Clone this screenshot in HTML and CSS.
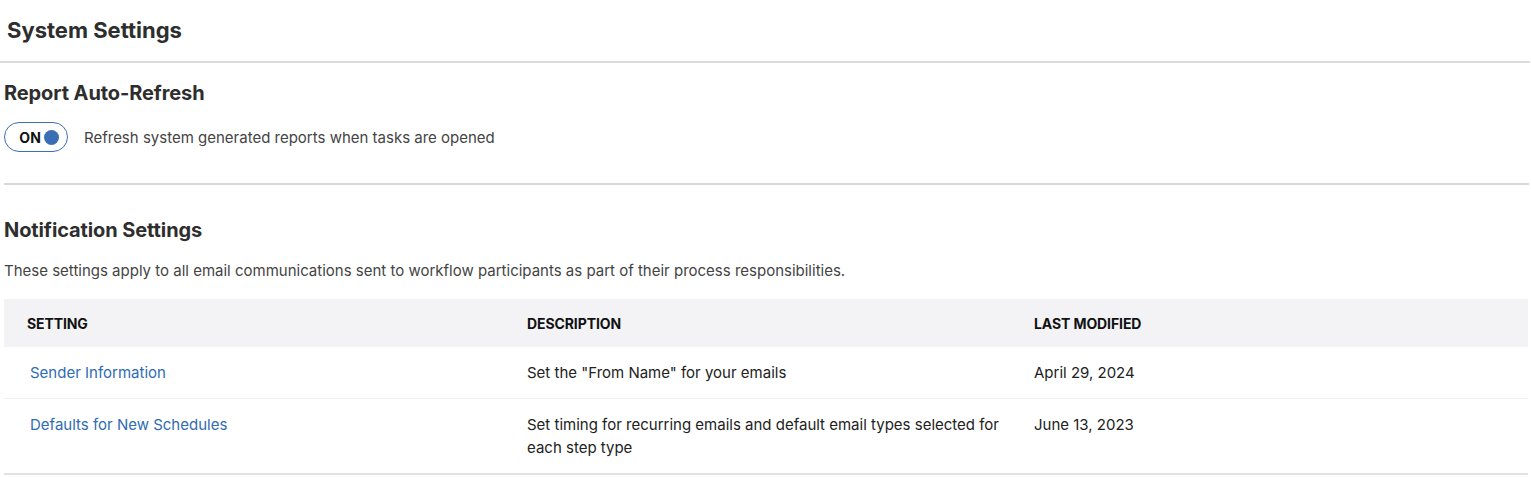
FILE: index.html
```html
<!DOCTYPE html>
<html>
<head>
<meta charset="utf-8">
<link rel="stylesheet" href="styles.css">
</head>
<body>
<header class="page-header">
  <h1 class="page-title">System Settings</h1>
</header>
<main class="content">
  <section class="section section-refresh">
    <h2 class="section-title">Report Auto-Refresh</h2>
    <div class="toggle-row">
      <span class="toggle"><span class="toggle-label">ON</span><span class="toggle-dot"></span></span>
      <span class="toggle-text">Refresh system generated reports when tasks are opened</span>
    </div>
  </section>
  <section class="section section-notify">
    <h2 class="section-title">Notification Settings</h2>
    <p class="section-desc">These settings apply to all email communications sent to workflow participants as part of their process responsibilities.</p>
    <div class="table">
      <div class="row head">
        <div class="cell c1">SETTING</div>
        <div class="cell c2">DESCRIPTION</div>
        <div class="cell c3">LAST MODIFIED</div>
      </div>
      <div class="row body">
        <div class="cell c1"><a class="link" href="#">Sender Information</a></div>
        <div class="cell c2">Set the "From Name" for your emails</div>
        <div class="cell c3">April 29, 2024</div>
      </div>
      <div class="row body last">
        <div class="cell c1"><a class="link" href="#">Defaults for New Schedules</a></div>
        <div class="cell c2">Set timing for recurring emails and default email types selected for each step type</div>
        <div class="cell c3">June 13, 2023</div>
      </div>
    </div>
  </section>
</main>
</body>
</html>
```

FILE: styles.css
```css
* { box-sizing: border-box; }
html, body { margin: 0; padding: 0; background: #fff; }
body {
  font-family: Inter, "Noto Sans", "Liberation Sans", sans-serif;
  color: #222;
  width: 1531px;
}
.page-header {
  height: 63px;
  border-bottom: 2px solid #dcdcdc;
  padding: 17px 0 0 7px;
  margin-right: 1px;
}
.page-title {
  margin: 0;
  font-size: 22px;
  line-height: 26px;
  font-weight: 700;
  color: #2e2e2e;
}
.content {
  padding: 0 2px 0 4px;
}
.section-refresh {
  padding-top: 18px;
  padding-bottom: 31px;
  border-bottom: 2px solid #d8d8d8;
}
.section-title {
  margin: 0;
  font-size: 20px;
  line-height: 24px;
  font-weight: 700;
  color: #2e2e2e;
  letter-spacing: -0.1px;
}
.toggle-row {
  display: flex;
  align-items: center;
  gap: 16px;
  margin-top: 17px;
}
.toggle {
  display: inline-flex;
  align-items: center;
  justify-content: flex-end;
  width: 64px;
  height: 30px;
  border: 1.5px solid #3c6fb4;
  border-radius: 15px;
  padding-right: 8px;
  gap: 3px;
}
.toggle-label {
  font-size: 14px;
  font-weight: 700;
  color: #111;
  letter-spacing: 0.2px;
}
.toggle-dot {
  width: 15px;
  height: 15px;
  border-radius: 50%;
  background: #3a6fb6;
}
.toggle-text {
  font-size: 15px;
  color: #444;
}
.section-notify {
  padding-top: 33px;
}
.section-desc {
  margin: 18px 0 17px;
  font-size: 15px;
  line-height: 22px;
  color: #444;
}
.table {
  border-bottom: 2px solid #e2e2e2;
  margin-right: 1px;
}
.row {
  display: grid;
  grid-template-columns: 508px 508px 1fr;
}
.row.head {
  background: #f3f3f5;
  height: 48px;
  align-items: center;
}
.row.head .cell {
  font-size: 14px;
  font-weight: 700;
  color: #111;
  letter-spacing: -0.1px;
}
.row.body {
  border-top: 1px solid #f0f0f0;
  font-size: 15px;
  line-height: 23px;
  color: #222;
}
.row.head + .row.body { border-top: none; }
.cell { padding: 14px 15px; }
.row.head .cell { padding-top: 0; padding-bottom: 0; }
.cell.c1 { padding-left: 23px; }
.cell.c2 { padding-left: 15px; padding-right: 15px; }
.cell.c3 { padding-left: 14px; }
.row.body .cell.c1 { padding-left: 26px; }
.link {
  color: #2f6cb3;
  text-decoration: none;
}
```
